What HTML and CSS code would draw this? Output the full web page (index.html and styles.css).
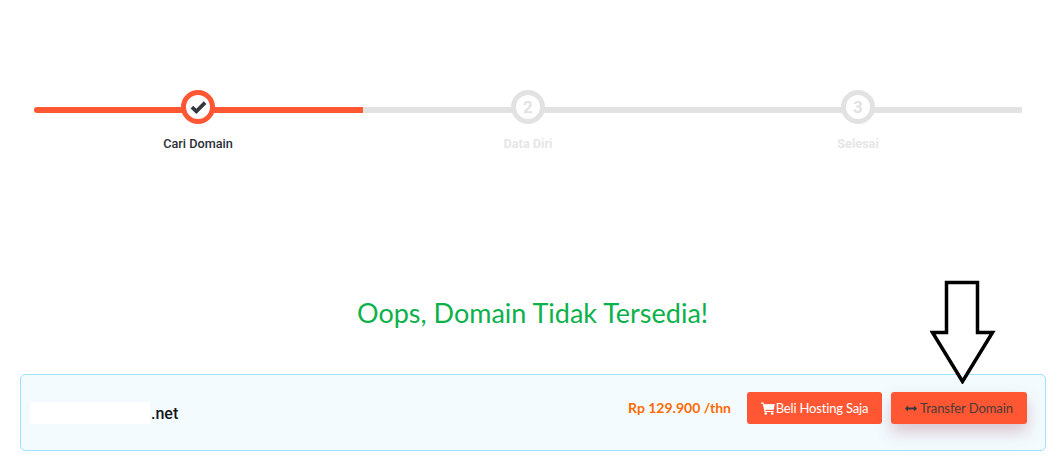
FILE: index.html
```html
<!DOCTYPE html>
<html lang="id">
<head>
<meta charset="utf-8">
<title>Cari Domain</title>
<link rel="stylesheet" href="styles.css">
</head>
<body>
<div class="page">
  <ol class="stepper">
    <li class="step step-done">
      <span class="track"></span>
      <span class="dot">
        <svg class="check" viewBox="0 0 16 13" width="17" height="14"><path d="M1.8 6.6 L6 10.6 L14.2 2.4" fill="none" stroke="#33383f" stroke-width="3.4"/></svg>
      </span>
      <span class="label">Cari Domain</span>
    </li>
    <li class="step">
      <span class="track"></span>
      <span class="dot">2</span>
      <span class="label">Data Diri</span>
    </li>
    <li class="step">
      <span class="track"></span>
      <span class="dot">3</span>
      <span class="label">Selesai</span>
    </li>
  </ol>
  <h1 class="title">Oops, Domain Tidak Tersedia!</h1>
  <div class="card">
    <div class="domain"><span class="mask"></span><span class="tld">.net</span></div>
    <div class="actions">
      <span class="price">Rp 129.900 /thn</span>
      <button class="btn btn-buy">
        <svg class="cart" viewBox="0 0 14 13" width="14" height="13"><path d="M0 .6h2.6l.4 1.6h10.8l-1.3 5.6H4.3l.3 1.2h8v1.1H3.5L1.8 1.7H0z" fill="#fff"/><rect x="3" y="2.6" width="10" height="4.6" fill="#fff"/><circle cx="4.8" cy="11.6" r="1.3" fill="#fff"/><circle cx="11.2" cy="11.6" r="1.3" fill="#fff"/></svg>Beli Hosting Saja
      </button>
      <button class="btn btn-transfer">
        <svg class="swap" viewBox="0 0 12 7" width="12" height="7"><path d="M0 3.5 L3 .5 V2.6 H9 V.5 L12 3.5 L9 6.5 V4.4 H3 V6.5 Z" fill="#33383f"/></svg>Transfer Domain
      </button>
    </div>
  </div>
</div>
<svg class="arrow" viewBox="0 0 66 104" width="66" height="104"><path d="M16.5 2.5 H47.5 V52.5 H62.5 L32.5 101.5 L2.5 52.5 H16.5 Z" fill="#fff" stroke="#000" stroke-width="3.5"/></svg>
</body>
</html>
```
FILE: styles.css
```css
* { box-sizing: border-box; }
html, body { margin: 0; padding: 0; background: #fff; }
body { position: relative; height: 463px; overflow: hidden; font-family: "Lato", sans-serif; }
.page { padding-top: 90px; }

.stepper { display: flex; list-style: none; margin: 0; padding: 0 40px 0 33px; }
.step { flex: 1; position: relative; display: flex; flex-direction: column; align-items: center; }
.track { position: absolute; left: 0; right: 0; top: 17px; height: 6px; background: #e2e2e2; }
.step:last-child .track { right: 1px; }
.step-done .track { left: 1px; background: #ff5733; border-radius: 3px 0 0 3px; }
.dot {
  position: relative; width: 34px; height: 34px; border-radius: 50%;
  border: 5px solid #e2e2e2; background: #fff; color: #e2e2e2;
  display: flex; align-items: center; justify-content: center;
  font: 700 17px/1 "Roboto", sans-serif;
}
.step-done .dot { border-color: #ff5733; }
.label { margin-top: 12px; font: 700 12.7px/16px "Roboto", sans-serif; color: #e6e6e6; }
.step-done .label { color: #2b2f36; font-weight: 500; }

.title { margin: 141px 0 0; padding-left: 2px; text-align: center; font: 400 27px/40px "Lato", sans-serif; color: #0db14b; }

.card {
  display: flex; align-items: flex-start; justify-content: space-between;
  margin: 41px 17px 0 20px; height: 77px; padding: 17px 18px 0 9px;
  border: 1px solid #9fe2ff; border-radius: 5px; background: #f3fbff;
}
.domain { display: flex; align-items: flex-end; font: 500 16px/22px "Roboto", sans-serif; color: #14171c; margin-top: 10px; }
.mask { display: block; width: 120px; height: 22px; background: #fff; }
.tld { display: block; line-height: 22px; margin-left: 1px; position: relative; top: 1px; }

.actions { display: flex; align-items: center; }
.price { font: 700 14px/18px "Lato", sans-serif; color: #ff6a00; margin-right: 16px; }
.btn {
  display: flex; align-items: center; justify-content: center; gap: 1px;
  width: 135px; height: 32px; padding: 0; border: 0; border-radius: 3px;
  background: #ff5733; font: 400 13px/1 "Lato", sans-serif;
}
.btn-buy { color: #fff; margin-right: 9px; letter-spacing: -.17px; }
.btn-transfer { width: 136px; color: #4a3a3a; gap: 3px; letter-spacing: -.06px; box-shadow: 0 8px 16px rgba(150, 60, 80, .28); }
.cart, .swap { flex: none; }

.arrow { position: absolute; left: 930px; top: 280px; }
```
